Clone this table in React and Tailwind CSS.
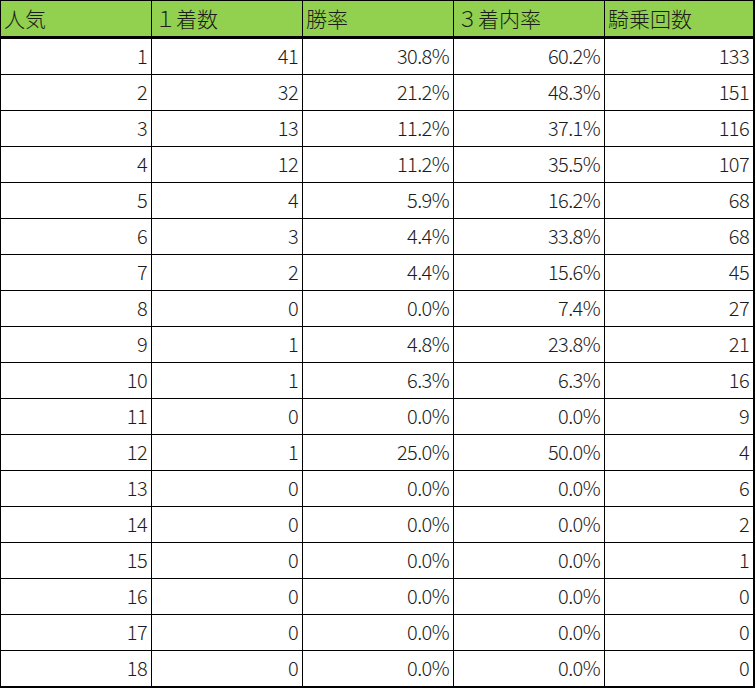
import React from "react";

const headers = ["人気", "１着数", "勝率", "３着内率", "騎乗回数"];

const rows = [
  [1, 41, "30.8%", "60.2%", 133],
  [2, 32, "21.2%", "48.3%", 151],
  [3, 13, "11.2%", "37.1%", 116],
  [4, 12, "11.2%", "35.5%", 107],
  [5, 4, "5.9%", "16.2%", 68],
  [6, 3, "4.4%", "33.8%", 68],
  [7, 2, "4.4%", "15.6%", 45],
  [8, 0, "0.0%", "7.4%", 27],
  [9, 1, "4.8%", "23.8%", 21],
  [10, 1, "6.3%", "6.3%", 16],
  [11, 0, "0.0%", "0.0%", 9],
  [12, 1, "25.0%", "50.0%", 4],
  [13, 0, "0.0%", "0.0%", 6],
  [14, 0, "0.0%", "0.0%", 2],
  [15, 0, "0.0%", "0.0%", 1],
  [16, 0, "0.0%", "0.0%", 0],
  [17, 0, "0.0%", "0.0%", 0],
  [18, 0, "0.0%", "0.0%", 0],
];

const App = () => {
  return (
    <div className="bg-white min-h-screen font-['Noto_Sans_CJK_JP',sans-serif] font-light text-[#1c1c1c]">
      <div className="w-[755px] border-l border-t border-r-2 border-b-2 border-black">
        {/* Header */}
        <div className="flex h-[38px] bg-[#92d050] border-b-[3px] border-black">
          {headers.map((h, i) => (
            <div
              key={h}
              className={`flex items-center pl-[3px] pb-[1px] text-[21px] leading-none ${
                i < 4 ? "w-[151px] border-r border-black" : "flex-1"
              }`}
            >
              {h}
            </div>
          ))}
        </div>

        {/* Rows */}
        {rows.map((row, r) => (
          <div
            key={row[0]}
            className={`flex ${r < rows.length - 1 ? "h-[36px] border-b border-black" : "h-[35px]"}`}
          >
            {row.map((v, i) => (
              <div
                key={i}
                className={`flex items-center justify-end pr-[4px] pb-[2px] text-[20px] leading-none tracking-[-0.6px] ${
                  i < 4 ? "w-[151px] border-r border-black" : "flex-1"
                }`}
              >
                {v}
              </div>
            ))}
          </div>
        ))}
      </div>
    </div>
  );
};

export default App;
